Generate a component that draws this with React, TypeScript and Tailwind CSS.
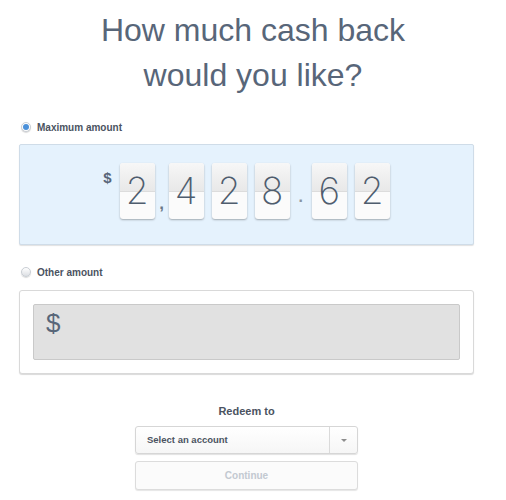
import React from 'react';

const SLATE = '#586679';
const LABEL = '#4b5361';

const DIGITS = ['2', ',', '4', '2', '8', '.', '6', '2'];

function Radio({ checked }: { checked: boolean }) {
  return (
    <span
      className={`relative flex h-[10px] w-[10px] items-center justify-center rounded-full border border-[#c9ced4] ${
        checked ? 'bg-white' : 'bg-gradient-to-b from-white to-[#dcdfe3]'
      } shadow-[0_1px_1px_rgba(0,0,0,0.15)]`}
    >
      {checked && <span className="h-[6px] w-[6px] rounded-full bg-[#4a90d9]" />}
    </span>
  );
}

function Card({ d }: { d: string }) {
  return (
    <div className="relative h-[56px] w-[35px] overflow-hidden rounded-[3px] bg-[#fbfbfb] shadow-[0_1px_2px_rgba(0,0,0,0.3)]">
      <div className="absolute inset-x-0 top-0 h-1/2 bg-gradient-to-b from-[#f7f7f7] to-[#e8e8e8]" />
      <div className="absolute inset-x-0 top-1/2 h-px bg-[#dcdcdc]" />
      <span
        className="relative flex h-full items-center justify-center text-[37px] font-extralight leading-none text-[#4f5d6e]"
        style={{ fontFamily: 'Inter, "DejaVu Sans", sans-serif' }}
      >
        {d}
      </span>
    </div>
  );
}

export default function App() {
  return (
    <div className="min-h-[500px] w-[506px] bg-white" style={{ fontFamily: '"Liberation Sans", Arial, sans-serif' }}>
      {/* Heading */}
      <h1 className="pt-[8px] text-center text-[32px] font-normal leading-[45px]" style={{ color: SLATE }}>
        How much cash back
        <br />
        would you like?
      </h1>

      <div className="ml-[19px] w-[455px]">
        {/* Maximum amount */}
        <label className="mt-[23px] flex h-[12px] items-center gap-[6px] pl-[2px]">
          <Radio checked />
          <span className="text-[10px] font-bold" style={{ color: LABEL }}>
            Maximum amount
          </span>
        </label>

        <div className="mt-[11px] flex h-[101px] items-center justify-center rounded-[2px] border border-[#cfdce8] bg-[#e5f2fd] pb-[8px] shadow-[0_1px_1px_rgba(0,0,0,0.12)]">
          <div className="flex items-center gap-[8px]">
            <span className="mb-[24px] text-[15px] font-bold text-[#586679]">$</span>
            {DIGITS.map((d, i) =>
              d === ',' ? (
                <span key={i} className="-mx-[4px] mt-[26px] w-[6px] text-center text-[17px] font-bold text-[#6b7787]">
                  ,
                </span>
              ) : d === '.' ? (
                <span key={i} className="mt-[12px] w-[6px] text-center text-[16px] font-bold text-[#8a94a1]">
                  .
                </span>
              ) : (
                <Card key={i} d={d} />
              ),
            )}
          </div>
        </div>

        {/* Other amount */}
        <label className="mt-[21px] flex h-[12px] items-center gap-[6px] pl-[2px]">
          <Radio checked={false} />
          <span className="text-[10px] font-bold" style={{ color: LABEL }}>
            Other amount
          </span>
        </label>

        <div className="mt-[12px] h-[84px] rounded-[3px] border border-[#d9d9d9] bg-white p-[13px] shadow-[0_1px_1px_rgba(0,0,0,0.15)]">
          <div className="h-[56px] rounded-[2px] border border-[#c9c9c9] bg-[#e1e1e1] px-[12px] pt-[5px]">
            <span className="text-[26px] leading-none" style={{ color: SLATE }}>
              $
            </span>
          </div>
        </div>

        {/* Redeem */}
        <p className="mt-[31px] text-center text-[11px] font-bold leading-[12px]" style={{ color: LABEL }}>
          Redeem to
        </p>

        <div className="mx-auto mt-[9px] w-[223px]">
          <button className="flex h-[28px] w-full items-stretch rounded-[3px] border border-[#d6d6d6] bg-gradient-to-b from-white to-[#f6f6f6] shadow-[0_1px_1px_rgba(0,0,0,0.12)]">
            <span className="flex flex-1 items-center pl-[11px] text-[9.5px] font-bold" style={{ color: LABEL }}>
              Select an account
            </span>
            <span className="flex w-[28px] items-center justify-center border-l border-[#dadada]">
              <span className="h-0 w-0 border-x-[3px] border-t-[3px] border-x-transparent border-t-[#8d8d8d]" />
            </span>
          </button>

          <button className="mt-[7px] flex h-[29px] w-full items-center justify-center rounded-[3px] border border-[#dcdcdc] bg-[#fbfbfb] text-[10px] font-bold text-[#c3c9d1] shadow-[0_1px_1px_rgba(0,0,0,0.1)]">
            Continue
          </button>
        </div>
      </div>
    </div>
  );
}
